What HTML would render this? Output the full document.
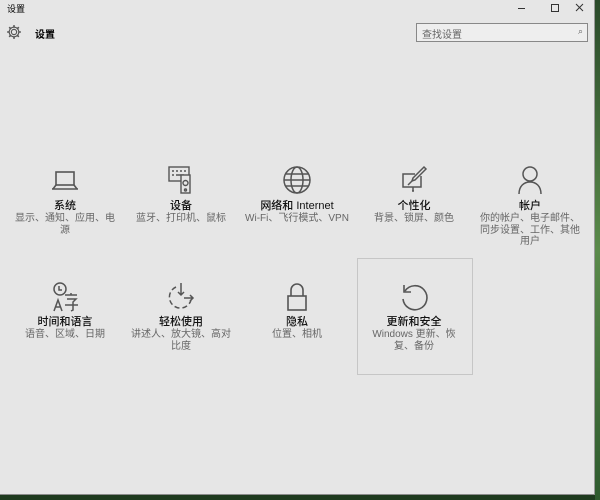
<!DOCTYPE html><html><head><meta charset="utf-8"><style>
body{margin:0;width:600px;height:500px;background:#1e3a1e;overflow:hidden;font-family:"Liberation Sans","Noto Sans CJK SC",sans-serif;position:relative}
.right{position:absolute;left:595px;top:0;width:5px;height:500px;background:linear-gradient(#2a4a2a,#5a8a4a 50%,#2e5a2e)}
.win{position:absolute;left:0;top:0;width:595px;height:495px;background:#e6e6e6;border-right:1px solid #9a9a9a;border-bottom:1px solid #8a8a8a;box-sizing:border-box}
.t{position:absolute;font-size:11px;color:#000}
.tile{position:absolute;width:116px;text-align:center}
.tile svg{display:block;margin:0 auto}
.n{font-size:11px;color:#111;line-height:12px;font-weight:500}
.s{font-size:10px;color:#666;line-height:11.5px;margin-top:1px}
</style></head><body>
<div class="right"></div>
<div class="win">
<div class="t" style="left:7px;top:2px;font-size:9px">设置</div>
<div style="position:absolute;left:518px;top:8px;width:7px;border-top:1px solid #333"></div>
<div style="position:absolute;left:551px;top:4px;width:6px;height:6px;border:1px solid #333"></div>
<svg style="position:absolute;left:575px;top:3px" width="9" height="9"><path d="M1 1L8 8M8 1L1 8" stroke="#333" stroke-width="1"/></svg>
<svg style="position:absolute;left:6px;top:24px" width="16" height="16" viewBox="0 0 14 14"><circle cx="7" cy="7" r="2.3" fill="none" stroke="#555"/><path d="M7 1v2M7 11v2M1 7h2M11 7h2M2.8 2.8l1.4 1.4M9.8 9.8l1.4 1.4M2.8 11.2l1.4-1.4M9.8 4.2l1.4-1.4" stroke="#555" stroke-width="1.4"/><circle cx="7" cy="7" r="4.2" fill="none" stroke="#555"/></svg>
<div class="t" style="left:35px;top:26px;font-weight:bold;font-size:10px">设置</div>
<div style="position:absolute;left:416px;top:23px;width:172px;height:19px;border:1px solid #888;background:#eee;box-sizing:border-box;font-size:10px;color:#666;padding:2px 5px">查找设置<span style="position:absolute;right:4px;top:2px;font-size:9px">⌕</span></div>

<div class="tile" style="left:7px;top:165px"><svg width="30" height="30" viewBox="0 0 30 30" fill="none" stroke="#555" stroke-width="1.6"><rect x="6" y="7" width="18" height="13"/><path d="M2 24h26"/><path d="M3 24l3-4M27 24l-3-4"/></svg><div class="n" style="margin-top:5px">系统</div><div class="s">显示、通知、应用、电<br>源</div></div>
<div class="tile" style="left:123px;top:165px"><svg width="30" height="30" viewBox="0 0 30 30" fill="none" stroke="#555" stroke-width="1.4"><rect x="3" y="2" width="20" height="14"/><path d="M6 6h2M10 6h2M14 6h2M18 6h2M6 10h2M10 10h8"/><rect x="15" y="10" width="9" height="18" fill="#e6e6e6"/><circle cx="19.5" cy="18" r="2.5"/><circle cx="19.5" cy="25" r="1"/></svg><div class="n" style="margin-top:5px">设备</div><div class="s">蓝牙、打印机、鼠标</div></div>
<div class="tile" style="left:239px;top:165px"><svg width="30" height="30" viewBox="0 0 30 30" fill="none" stroke="#555" stroke-width="1.5"><circle cx="15" cy="15" r="13"/><ellipse cx="15" cy="15" rx="6" ry="13"/><path d="M2 15h26M4 9h22M4 21h22"/></svg><div class="n" style="margin-top:5px">网络和 Internet</div><div class="s">Wi-Fi、飞行模式、VPN</div></div>
<div class="tile" style="left:356px;top:165px"><svg width="30" height="30" viewBox="0 0 30 30" fill="none" stroke="#555" stroke-width="1.5"><path d="M22 11v11H4V9h12"/><path d="M13 26h2M14 22v4"/><path d="M27 4l-11 11-3 1 1-3 11-11z"/><path d="M9 20l4-4"/></svg><div class="n" style="margin-top:5px">个性化</div><div class="s">背景、锁屏、颜色</div></div>
<div class="tile" style="left:472px;top:165px"><svg width="30" height="30" viewBox="0 0 30 30" fill="none" stroke="#555" stroke-width="1.5"><circle cx="15" cy="9" r="7"/><path d="M4 29c0-8 5-12 11-12s11 4 11 12"/></svg><div class="n" style="margin-top:5px">帐户</div><div class="s">你的帐户、电子邮件、<br>同步设置、工作、其他<br>用户</div></div>

<div class="tile" style="left:7px;top:281px"><svg width="30" height="32" viewBox="0 0 30 32" fill="none" stroke="#555" stroke-width="1.5"><circle cx="10" cy="8" r="6"/><path d="M9 5v4h3"/><path d="M4 30l4-11 4 11M5 26h6"/><path d="M15 14h12M21 12v2M17 18h9l-3 3v8l-2 1M15 24h13"/></svg><div class="n" style="margin-top:3px">时间和语言</div><div class="s">语音、区域、日期</div></div>
<div class="tile" style="left:123px;top:281px"><svg width="30" height="32" viewBox="0 0 30 32" fill="none" stroke="#555" stroke-width="1.5"><path d="M10 6A11 11 0 1 0 25 19" stroke-dasharray="5 3"/><path d="M15 2v12M12 11l3 3 3-3M18 17h9M24 14l3 3-3 3"/></svg><div class="n" style="margin-top:3px">轻松使用</div><div class="s">讲述人、放大镜、高对<br>比度</div></div>
<div class="tile" style="left:239px;top:281px"><svg width="30" height="32" viewBox="0 0 30 32" fill="none" stroke="#555" stroke-width="1.6"><path d="M9 15V9a6 6 0 0 1 12 0v6"/><rect x="6" y="15" width="18" height="14"/></svg><div class="n" style="margin-top:3px">隐私</div><div class="s">位置、相机</div></div>
<div style="position:absolute;left:357px;top:258px;width:116px;height:117px;border:1px solid #c6c6c6;box-sizing:border-box"></div>
<div class="tile" style="left:356px;top:281px"><svg width="30" height="32" viewBox="0 0 30 32" fill="none" stroke="#555" stroke-width="1.6"><path d="M6 10A12 12 0 1 1 4 18"/><path d="M5 4v7h7"/></svg><div class="n" style="margin-top:3px">更新和安全</div><div class="s">Windows 更新、恢<br>复、备份</div></div>
</div>
</body></html>
